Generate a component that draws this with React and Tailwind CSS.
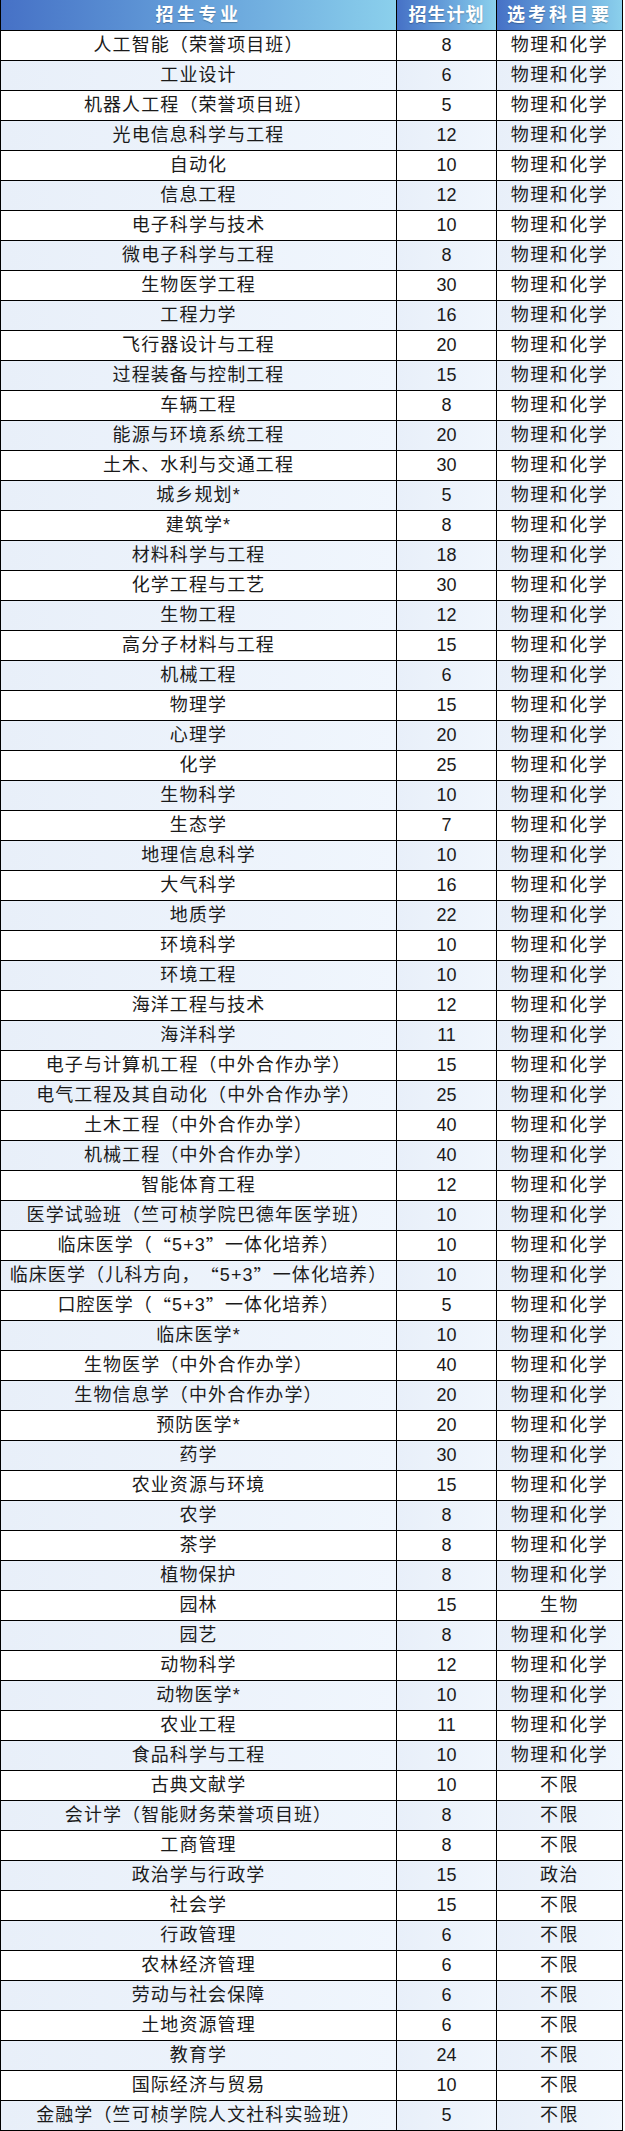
import React from "react";

const rows = [
  ["人工智能（荣誉项目班）", "8", "物理和化学"],
  ["工业设计", "6", "物理和化学"],
  ["机器人工程（荣誉项目班）", "5", "物理和化学"],
  ["光电信息科学与工程", "12", "物理和化学"],
  ["自动化", "10", "物理和化学"],
  ["信息工程", "12", "物理和化学"],
  ["电子科学与技术", "10", "物理和化学"],
  ["微电子科学与工程", "8", "物理和化学"],
  ["生物医学工程", "30", "物理和化学"],
  ["工程力学", "16", "物理和化学"],
  ["飞行器设计与工程", "20", "物理和化学"],
  ["过程装备与控制工程", "15", "物理和化学"],
  ["车辆工程", "8", "物理和化学"],
  ["能源与环境系统工程", "20", "物理和化学"],
  ["土木、水利与交通工程", "30", "物理和化学"],
  ["城乡规划*", "5", "物理和化学"],
  ["建筑学*", "8", "物理和化学"],
  ["材料科学与工程", "18", "物理和化学"],
  ["化学工程与工艺", "30", "物理和化学"],
  ["生物工程", "12", "物理和化学"],
  ["高分子材料与工程", "15", "物理和化学"],
  ["机械工程", "6", "物理和化学"],
  ["物理学", "15", "物理和化学"],
  ["心理学", "20", "物理和化学"],
  ["化学", "25", "物理和化学"],
  ["生物科学", "10", "物理和化学"],
  ["生态学", "7", "物理和化学"],
  ["地理信息科学", "10", "物理和化学"],
  ["大气科学", "16", "物理和化学"],
  ["地质学", "22", "物理和化学"],
  ["环境科学", "10", "物理和化学"],
  ["环境工程", "10", "物理和化学"],
  ["海洋工程与技术", "12", "物理和化学"],
  ["海洋科学", "11", "物理和化学"],
  ["电子与计算机工程（中外合作办学）", "15", "物理和化学"],
  ["电气工程及其自动化（中外合作办学）", "25", "物理和化学"],
  ["土木工程（中外合作办学）", "40", "物理和化学"],
  ["机械工程（中外合作办学）", "40", "物理和化学"],
  ["智能体育工程", "12", "物理和化学"],
  ["医学试验班（竺可桢学院巴德年医学班）", "10", "物理和化学"],
  ["临床医学（“5+3”一体化培养）", "10", "物理和化学"],
  ["临床医学（儿科方向，“5+3”一体化培养）", "10", "物理和化学"],
  ["口腔医学（“5+3”一体化培养）", "5", "物理和化学"],
  ["临床医学*", "10", "物理和化学"],
  ["生物医学（中外合作办学）", "40", "物理和化学"],
  ["生物信息学（中外合作办学）", "20", "物理和化学"],
  ["预防医学*", "20", "物理和化学"],
  ["药学", "30", "物理和化学"],
  ["农业资源与环境", "15", "物理和化学"],
  ["农学", "8", "物理和化学"],
  ["茶学", "8", "物理和化学"],
  ["植物保护", "8", "物理和化学"],
  ["园林", "15", "生物"],
  ["园艺", "8", "物理和化学"],
  ["动物科学", "12", "物理和化学"],
  ["动物医学*", "10", "物理和化学"],
  ["农业工程", "11", "物理和化学"],
  ["食品科学与工程", "10", "物理和化学"],
  ["古典文献学", "10", "不限"],
  ["会计学（智能财务荣誉项目班）", "8", "不限"],
  ["工商管理", "8", "不限"],
  ["政治学与行政学", "15", "政治"],
  ["社会学", "15", "不限"],
  ["行政管理", "6", "不限"],
  ["农林经济管理", "6", "不限"],
  ["劳动与社会保障", "6", "不限"],
  ["土地资源管理", "6", "不限"],
  ["教育学", "24", "不限"],
  ["国际经济与贸易", "10", "不限"],
  ["金融学（竺可桢学院人文社科实验班）", "5", "不限"],
];

const headCell =
  "flex h-[30px] items-center justify-center bg-gradient-to-r from-[#4671c6] to-[#8bd0ec] border-r border-black text-[18px] font-bold text-white [text-shadow:0_1px_1px_rgba(0,0,0,0.25)]";

// curly quotes should take the full CJK width, as in the source sheet
function Major({ text }) {
  const parts = text.split(/([“”])/);
  return parts.map((p, i) =>
    p === "“" || p === "”" ? (
      <span key={i} className="font-['Noto_Sans_CJK_SC']">
        {p}
      </span>
    ) : (
      <React.Fragment key={i}>{p}</React.Fragment>
    )
  );
}

export default function App() {
  return (
    <div
      className="w-[623px] bg-white text-[#1a1a1a]"
      style={{ fontFamily: '"Liberation Sans", "Noto Sans CJK SC", sans-serif' }}
    >
      <div className="flex border-l border-b border-black">
        <div className={`${headCell} w-[396px] tracking-[3.5px]`}>招生专业</div>
        <div className={`${headCell} w-[100px] tracking-[1px]`}>招生计划</div>
        <div className={`${headCell} w-[126px] tracking-[3px]`}>选考科目要</div>
      </div>
      {rows.map(([major, plan, subject], i) => {
        const alt = i % 2 === 1;
        const cell = alt
          ? "bg-gradient-to-r from-[#e8eff9] to-[#f0f6fd]"
          : "bg-white";
        return (
          <div key={i} className="flex h-[30px] border-l border-b border-black text-[18px]">
            <div className={`${cell} flex w-[396px] items-center justify-center border-r border-black tracking-[1.1px] whitespace-nowrap`}>
              <Major text={major} />
            </div>
            <div className={`${cell} flex w-[100px] items-center justify-center border-r border-black`}>
              {plan}
            </div>
            <div className={`${cell} flex w-[126px] items-center justify-center border-r border-black tracking-[1.5px]`}>
              {subject}
            </div>
          </div>
        );
      })}
    </div>
  );
}
